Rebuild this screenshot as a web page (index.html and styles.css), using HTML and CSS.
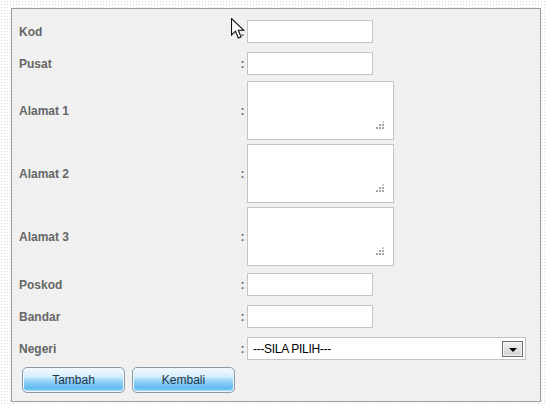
FILE: index.html
```html
<!DOCTYPE html>
<html lang="ms">
<head>
  <meta charset="UTF-8" />
  <title>Pusat</title>
  <link rel="stylesheet" href="styles.css">
</head>
<body>
  <div class="panel">
    <div class="row">
      <label class="lbl" for="kod">Kod</label>
      <span class="colon">:</span>
      <input type="text" id="kod" class="txt">
    </div>
    <div class="row">
      <label class="lbl" for="pusat">Pusat</label>
      <span class="colon">:</span>
      <input type="text" id="pusat" class="txt">
    </div>
    <div class="row row-ta">
      <label class="lbl" for="alamat1">Alamat 1</label>
      <span class="colon">:</span>
      <span class="ta-wrap"><textarea id="alamat1"></textarea><span class="grip"></span></span>
    </div>
    <div class="row row-ta">
      <label class="lbl" for="alamat2">Alamat 2</label>
      <span class="colon">:</span>
      <span class="ta-wrap"><textarea id="alamat2"></textarea><span class="grip"></span></span>
    </div>
    <div class="row row-ta">
      <label class="lbl" for="alamat3">Alamat 3</label>
      <span class="colon">:</span>
      <span class="ta-wrap"><textarea id="alamat3"></textarea><span class="grip"></span></span>
    </div>
    <div class="row">
      <label class="lbl" for="poskod">Poskod</label>
      <span class="colon">:</span>
      <input type="text" id="poskod" class="txt">
    </div>
    <div class="row">
      <label class="lbl" for="bandar">Bandar</label>
      <span class="colon">:</span>
      <input type="text" id="bandar" class="txt">
    </div>
    <div class="row">
      <label class="lbl" for="negeri">Negeri</label>
      <span class="colon">:</span>
      <span class="sel-wrap">
        <select id="negeri">
          <option>---SILA PILIH---</option>
        </select>
        <span class="sel-btn"><span class="arrow"></span></span>
      </span>
    </div>
    <div class="actions">
      <button class="btn">Tambah</button>
      <button class="btn">Kembali</button>
    </div>
  </div>

  <!-- mouse pointer seen in the capture -->
  <svg class="cursor" width="14" height="22" viewBox="0 0 14 22">
    <path d="M0.5 0.5 L0.5 17 L4.5 13.2 L7.3 20 L10 18.9 L7.3 12.3 L12.8 12.3 Z" fill="#fff" stroke="#111" stroke-width="1.1" stroke-linejoin="miter"/>
  </svg>
</body>
</html>
```

FILE: styles.css
```css
body {
  margin: 0;
  padding: 8px 0 0 11px;
  font-family: "Liberation Sans", Arial, sans-serif;
  font-size: 12px;
  background-color: #fff;
  background-image: radial-gradient(#dcdcdc 0.7px, transparent 0.8px);
  background-size: 3px 3px;
  height: 405px;
  box-sizing: border-box;
  overflow: hidden;
}
.panel {
  width: 530px;
  box-sizing: border-box;
  background: #f0f0f0;
  border: 1px solid #9c9c9c;
  padding: 7px 7px 8px 7px;
}
.row {
  display: grid;
  grid-template-columns: 218px 10px auto;
  align-items: center;
  padding: 4px 0 5px 0;
}
.row-ta {
  padding: 1px 0 3px 0;
}
.lbl {
  font-weight: bold;
  color: #666;
}
.colon {
  font-weight: bold;
  color: #666;
  text-align: center;
  padding-left: 1px;
}
.txt {
  width: 126px;
  height: 23px;
  box-sizing: border-box;
  border: 1px solid #c4c4c4;
  background: #fff;
  margin: 0;
  padding: 2px 4px;
  font-family: inherit;
  font-size: 12px;
}
.ta-wrap {
  position: relative;
  display: block;
  width: 147px;
  height: 59px;
}
.ta-wrap textarea {
  display: block;
  width: 147px;
  height: 59px;
  box-sizing: border-box;
  border: 1px solid #c4c4c4;
  background: #fff;
  margin: 0;
  resize: none;
  font-family: inherit;
  font-size: 12px;
}
/* resize grip: one dot, the rest drawn as shadows */
.grip {
  position: absolute;
  right: 10px;
  bottom: 11px;
  width: 2px;
  height: 2px;
  background: #a4a4a4;
  box-shadow:
    0 -3px 0 #a4a4a4,
    -3px 0 0 #a4a4a4,
    0 -6px 0 #d0d0d0,
    -3px -3px 0 #a4a4a4,
    -6px 0 0 #a4a4a4;
}
.sel-wrap {
  position: relative;
  display: block;
  width: 279px;
  height: 23px;
}
.sel-wrap select {
  appearance: none;
  -webkit-appearance: none;
  width: 279px;
  height: 23px;
  box-sizing: border-box;
  border: 1px solid #c4c4c4;
  border-radius: 0;
  background: #fff;
  margin: 0;
  padding: 0 0 0 5px;
  font-family: inherit;
  font-size: 12px;
  color: #000;
  letter-spacing: -0.3px;
}
.sel-btn {
  position: absolute;
  right: 3px;
  top: 4px;
  width: 21px;
  height: 16px;
  box-sizing: border-box;
  border: 1px solid #6e6e6e;
  box-shadow: inset 0 0 0 1px #f4f4f4;
  background: linear-gradient(#f0f0f0, #d4d4d4);
  display: flex;
  align-items: center;
  justify-content: center;
}
.arrow {
  width: 0;
  height: 0;
  border-left: 4px solid transparent;
  border-right: 4px solid transparent;
  border-top: 4px solid #000;
  margin-top: 1px;
}
.actions {
  display: flex;
  gap: 7px;
  padding: 2px 0 0 3px;
}
.btn {
  width: 103px;
  height: 26px;
  border: 1px solid #8b99a6;
  border-radius: 5px;
  box-shadow: inset 0 0 0 1px #eef7fd, inset 0 -2px 2px #a8dcf8;
  background: linear-gradient(#f4faff 0%, #d6eefc 35%, #95d3f6 55%, #5db9ef 85%, #7fc9f3 100%);
  color: #22344a;
  font-family: inherit;
  font-size: 12px;
  padding: 0;
  cursor: pointer;
}
.cursor {
  position: absolute;
  left: 231px;
  top: 18px;
}
```
